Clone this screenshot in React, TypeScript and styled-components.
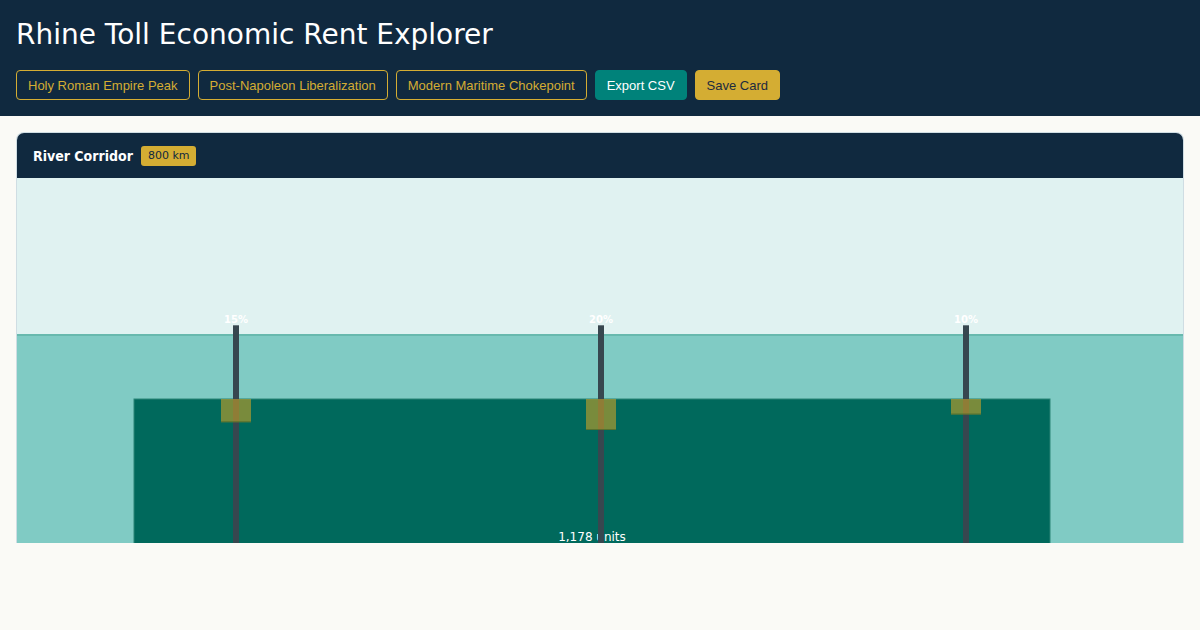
import styled, { createGlobalStyle } from 'styled-components';

const GlobalStyle = createGlobalStyle`
	body {
		margin: 0;
		background: #fafaf6;
		font-family: 'DejaVu Sans', sans-serif;
	}
`;

const presets = ['Holy Roman Empire Peak', 'Post-Napoleon Liberalization', 'Modern Maritime Chokepoint'];

const tolls = [
	{ x: 219, rate: 15 },
	{ x: 584, rate: 20 },
	{ x: 949, rate: 10 },
];

const CHART_W = 1166;
const CHART_H = 365;
const WATER_Y = 157;
const FLOW_Y = 221;
const FLOW_X = 117;
const FLOW_W = 916;

const App = () => {
	return (
		<>
			<GlobalStyle />
			<Header>
				<Title>Rhine Toll Economic Rent Explorer</Title>
				<Toolbar>
					{presets.map((p) => (
						<Button key={p} variant='outline'>
							{p}
						</Button>
					))}
					<Button variant='teal'>Export CSV</Button>
					<Button variant='gold'>Save Card</Button>
				</Toolbar>
			</Header>
			<Main>
				<Card>
					<CardHeader>
						<CardTitle>River Corridor</CardTitle>
						<Badge>800 km</Badge>
					</CardHeader>
					<ChartArea>
						<svg width={CHART_W} height={CHART_H} viewBox={`0 0 ${CHART_W} ${CHART_H}`}>
							<rect x={0} y={0} width={CHART_W} height={CHART_H} fill='#e0f2f1' />
							<rect x={0} y={WATER_Y} width={CHART_W} height={CHART_H} fill='#80cbc4' />
							<line x1={0} x2={CHART_W} y1={WATER_Y} y2={WATER_Y} stroke='#68b9ae' strokeWidth={2} />
							<rect
								x={FLOW_X}
								y={FLOW_Y}
								width={FLOW_W}
								height={CHART_H}
								fill='#00695c'
								stroke='#2b8577'
								strokeWidth={1}
							/>
							<text
								x={FLOW_X + FLOW_W / 2}
								y={363}
								textAnchor='middle'
								fill='#ffffff'
								fontSize={12}
								fontFamily='DejaVu Sans, sans-serif'
							>
								1,178 units
							</text>
							{tolls.map((t) => (
								<g key={t.x}>
									<rect x={t.x - 3} y={147} width={6} height={CHART_H} fill='#37474f' />
									<rect x={t.x - 3} y={147} width={6} height={1} fill='#6b7a80' />
									<text
										x={t.x}
										y={145}
										textAnchor='middle'
										fill='#ffffff'
										fontSize={10}
										fontWeight='bold'
										fontFamily='DejaVu Sans, sans-serif'
									>
										{t.rate}%
									</text>
									<rect
										x={t.x - 15}
										y={FLOW_Y}
										width={30}
										height={t.rate * 1.55}
										fill='#c9a227'
										fillOpacity={0.6}
									/>
									<rect
										x={t.x - 15}
										y={FLOW_Y + t.rate * 1.55 - 1}
										width={30}
										height={1}
										fill='#4f6b2c'
										fillOpacity={0.8}
									/>
								</g>
							))}
						</svg>
					</ChartArea>
				</Card>
			</Main>
		</>
	);
};

const Header = styled.header`
	background: #10293f;
	padding: 16px;
`;

const Title = styled.h1`
	margin: 0 0 16px;
	font-family: 'DejaVu Sans', sans-serif;
	font-weight: normal;
	font-size: 28px;
	line-height: 38px;
	color: #ffffff;
`;

const Toolbar = styled.div`
	display: flex;
	gap: 8px;
	align-items: center;
`;

interface ButtonProps {
	variant: 'outline' | 'teal' | 'gold';
}

const Button = styled.button<ButtonProps>`
	height: 30px;
	padding: 0 11px;
	border-radius: 4px;
	font-family: 'Liberation Sans', Arial, sans-serif;
	font-size: 13px;
	cursor: pointer;
	border: 1px solid ${(props) => (props.variant === 'teal' ? '#00827a' : '#d4ad33')};
	background: ${(props) =>
		props.variant === 'teal' ? '#00827a' : props.variant === 'gold' ? '#d4ad33' : 'transparent'};
	color: ${(props) =>
		props.variant === 'teal' ? '#ffffff' : props.variant === 'gold' ? '#1c2b3f' : '#d4ad33'};
`;

const Main = styled.main`
	padding: 16px;
`;

const Card = styled.section`
	border: 1px solid #cfdde3;
	border-bottom: none;
	border-radius: 8px 8px 0 0;
	overflow: hidden;
	background: #ffffff;
`;

const CardHeader = styled.div`
	display: flex;
	align-items: center;
	gap: 8px;
	height: 45px;
	padding: 0 16px;
	background: #10293f;
`;

const CardTitle = styled.h2`
	margin: 0;
	font-family: 'DejaVu Sans Condensed', 'DejaVu Sans', sans-serif;
	font-size: 14px;
	font-weight: 600;
	color: #ffffff;
`;

const Badge = styled.span`
	font-family: 'DejaVu Sans', sans-serif;
	font-size: 11px;
	line-height: 14px;
	padding: 3px 7px;
	border-radius: 3px;
	background: #d4ad33;
	color: #10293f;
`;

const ChartArea = styled.div`
	height: ${CHART_H}px;
	overflow: hidden;

	svg {
		display: block;
	}
`;

export default App;
